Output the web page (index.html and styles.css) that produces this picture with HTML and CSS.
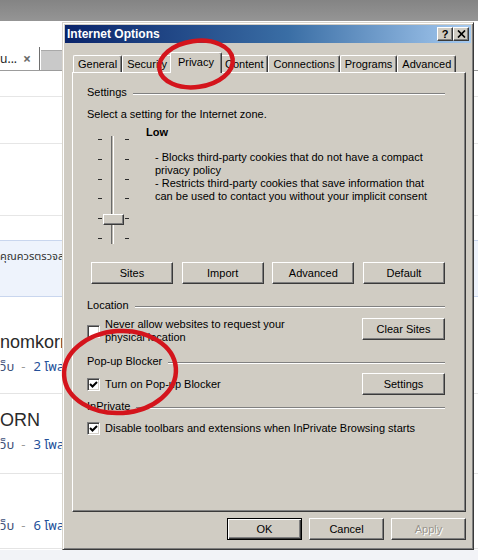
FILE: index.html
```html
<!DOCTYPE html>
<html lang="en">
<head>
<meta charset="utf-8">
<title>Internet Options</title>
<link rel="stylesheet" href="styles.css">
</head>
<body>
<div class="screen">
  <div class="topband"></div>

  <div class="browser">
    <div class="tabstrip">
      <div class="btab active"><span class="btab-title">u...</span><span class="btab-close">×</span></div>
      <div class="btab newtab"></div>
    </div>
    <div class="page">
      <div class="prow r1"></div>
      <div class="prow r2"></div>
      <div class="prow r3"></div>
      <div class="notice"><p>คุณควรตรวจสอบ</p></div>
      <div class="member m1">
        <div class="member-name">nomkorn</div>
        <div class="member-meta"><span class="kind">ว็บ</span><span class="sep">-</span><span class="posts">2 โพสต์</span></div>
      </div>
      <div class="member m2">
        <div class="member-name">ORN</div>
        <div class="member-meta"><span class="kind">ว็บ</span><span class="sep">-</span><span class="posts">3 โพสต์</span></div>
      </div>
      <div class="member m3">
        <div class="member-name">&nbsp;</div>
        <div class="member-meta"><span class="kind">ว็บ</span><span class="sep">-</span><span class="posts">6 โพสต์</span></div>
      </div>
    </div>
  </div>

  <div class="dialog">
    <div class="titlebar">
      <span class="title">Internet Options</span>
      <div class="caption-buttons">
        <span class="cap-btn help">?</span>
        <span class="cap-btn close"><svg width="9" height="8" viewBox="0 0 9 8"><path d="M1 0.5 L8 7.5 M8 0.5 L1 7.5" stroke="#000" stroke-width="1.7" fill="none"/></svg></span>
      </div>
    </div>

    <div class="tabs">
      <span class="tab">General</span>
      <span class="tab">Security</span>
      <span class="tab selected">Privacy</span>
      <span class="tab">Content</span>
      <span class="tab">Connections</span>
      <span class="tab">Programs</span>
      <span class="tab">Advanced</span>
    </div>

    <div class="panel">
      <div class="group-head"><span>Settings</span><i class="rule"></i></div>
      <p class="lead">Select a setting for the Internet zone.</p>

      <div class="zone">
        <div class="slider">
          <div class="ticks"><i></i><i></i><i></i><i></i><i></i><i></i></div>
          <div class="track"></div>
          <div class="ticks right"><i></i><i></i><i></i><i></i><i></i><i></i></div>
          <div class="thumb"></div>
        </div>
        <div class="zone-text">
          <div class="level">Low</div>
          <p class="desc">- Blocks third-party cookies that do not have a compact<br>privacy policy<br>- Restricts third-party cookies that save information that<br>can be used to contact you without your implicit consent</p>
        </div>
      </div>

      <div class="button-row">
        <span class="btn">Sites</span>
        <span class="btn">Import</span>
        <span class="btn">Advanced</span>
        <span class="btn">Default</span>
      </div>

      <div class="group-head location-head"><span>Location</span><i class="rule"></i></div>
      <div class="option-row location-row">
        <span class="check top"></span>
        <span class="option-text">Never allow websites to request your<br>physical location</span>
        <span class="btn side">Clear Sites</span>
      </div>

      <div class="group-head popup-head"><span>Pop-up Blocker</span><i class="rule"></i></div>
      <div class="option-row popup-row">
        <span class="check"><svg width="11" height="11" viewBox="0 0 11 11"><polyline points="2,5 4.5,7.5 9,3" fill="none" stroke="#000" stroke-width="2"/></svg></span>
        <span class="option-text">Turn on Pop-up Blocker</span>
        <span class="btn side">Settings</span>
      </div>

      <div class="group-head private-head"><span>InPrivate</span><i class="rule"></i></div>
      <div class="option-row private-row">
        <span class="check"><svg width="11" height="11" viewBox="0 0 11 11"><polyline points="2,5 4.5,7.5 9,3" fill="none" stroke="#000" stroke-width="2"/></svg></span>
        <span class="option-text">Disable toolbars and extensions when InPrivate Browsing starts</span>
      </div>
    </div>

    <div class="footer">
      <span class="btn wide default">OK</span>
      <span class="btn wide">Cancel</span>
      <span class="btn wide disabled">Apply</span>
    </div>
  </div>

  <svg class="marks" width="478" height="560" viewBox="0 0 478 560">
    <ellipse cx="196" cy="64" rx="37" ry="23" transform="rotate(-8 196 64)" fill="none" stroke="#d4141c" stroke-width="4.5"/>
    <ellipse cx="120" cy="372" rx="56" ry="41" transform="rotate(-4 120 372)" fill="none" stroke="#d4141c" stroke-width="4.5"/>
  </svg>
</div>
</body>
</html>
```

FILE: styles.css
```css
* { box-sizing: border-box; }

html, body {
  margin: 0;
  padding: 0;
}

body {
  width: 478px;
  height: 560px;
  overflow: hidden;
  font-family: "Liberation Sans", Arial, sans-serif;
  font-size: 11px;
  color: #000;
}

.screen {
  position: relative;
  width: 478px;
  height: 560px;
  overflow: hidden;
  background: #f2f3f7;
}

/* ---------- browser behind the dialog ---------- */

.topband {
  height: 21px;
  background: linear-gradient(#848484, #959595);
}

.browser {
  background: #fff;
  height: 529px;
}

.tabstrip {
  height: 50px;
  display: flex;
  align-items: flex-end;
  border-bottom: 1px solid #9c9c9c;
  background: #fff;
}

.btab {
  height: 23px;
}

.btab.active {
  width: 40px;
  display: flex;
  align-items: center;
  gap: 6px;
  border-right: 1px solid #6f6f6f;
  background: #fff;
  font-family: "Noto Sans", "Liberation Sans", sans-serif;
  font-size: 12px;
  color: #222;
}

.btab-close {
  color: #6a6a6a;
  font-size: 14px;
  font-weight: bold;
}

.newtab {
  width: 30px;
  height: 20px;
  margin-left: 1px;
  background: #c9c9c9;
  border-top: 1px solid #a9a9a9;
}

.page {
  font-family: "Noto Sans Thai", "Noto Sans", "DejaVu Sans", sans-serif;
}

.prow {
  border-bottom: 1px solid #e6e6e6;
}

.r1 { height: 26px; }
.r2 { height: 47px; }
.r3 { height: 72px; }

.notice {
  margin-top: 24px;
  height: 57px;
  background: #eef3fc;
  border-top: 1px solid #c9d6ee;
  border-bottom: 1px solid #c9d6ee;
}

.notice p {
  margin: 8px 0 0 0;
  font-size: 11px;
  line-height: 16px;
  color: #333;
  white-space: nowrap;
}

.member {
  border-bottom: 1px solid #e4e4e4;
}

.m1 { height: 97px; padding-top: 34px; }
.m2 { height: 80px; padding-top: 15px; }
.m3 { height: 75px; padding-top: 16px; }

.member-name {
  font-family: "Liberation Sans", Arial, sans-serif;
  font-size: 18px;
  line-height: 22px;
  color: #2a2a2a;
  white-space: nowrap;
}

.member-meta {
  margin-top: 6px;
  line-height: 16px;
  font-size: 13px;
  white-space: nowrap;
  display: flex;
}

.member-meta .kind { color: #3c4f78; }
.member-meta .sep { color: #9a9a9a; margin: 0 8px 0 7px; }
.member-meta .posts { color: #24509a; }

/* ---------- Internet Options dialog ---------- */

.dialog {
  position: absolute;
  left: 62px;
  top: 22px;
  width: 412px;
  height: 528px;
  padding: 2px;
  background: #d0ccc3;
  border: 1px solid;
  border-color: #d8d4cc #3a3a3a #3a3a3a #d8d4cc;
  box-shadow: inset 1px 1px #fff, inset -1px -1px #7f7f7f;
  z-index: 2;
}

.titlebar {
  height: 18px;
  display: flex;
  align-items: center;
  padding-left: 2px;
  padding-right: 2px;
  background: linear-gradient(to right, #0a246a 0%, #3a6ea5 55%, #a6caf0 100%);
}

.title {
  color: #fff;
  font-weight: bold;
  font-size: 12px;
}

.caption-buttons {
  margin-left: auto;
  display: flex;
}

.cap-btn {
  width: 16px;
  height: 14px;
  display: flex;
  align-items: center;
  justify-content: center;
  background: #d0ccc3;
  border: 1px solid;
  border-color: #fff #3a3a3a #3a3a3a #fff;
  box-shadow: inset -1px -1px #7f7f7f;
  font-weight: bold;
  font-size: 11px;
  line-height: 1;
}

.tabs {
  height: 29px;
  display: flex;
  align-items: flex-end;
  padding-left: 8px;
  position: relative;
  z-index: 1;
}

.tab {
  height: 17px;
  padding: 0 4px;
  display: flex;
  align-items: center;
  justify-content: center;
  border: 1px solid;
  border-bottom: none;
  border-color: #fff #3a3a3a #fff #fff;
  border-radius: 2px 2px 0 0;
  box-shadow: inset -1px 0 #7f7f7f;
  background: #d0ccc3;
  white-space: nowrap;
}

.tab.selected {
  height: 21px;
  margin: 0 -2px -1px;
  padding: 0 7px 2px;
  position: relative;
  z-index: 2;
}

.panel {
  margin-left: 7px;
  width: 394px;
  height: 440px;
  padding: 13px 20px 0 14px;
  border: 1px solid;
  border-color: #fff #3a3a3a #3a3a3a #fff;
  box-shadow: inset -1px -1px #7f7f7f;
  line-height: 13px;
}

.group-head {
  display: flex;
  align-items: center;
  height: 13px;
}

.group-head .rule {
  flex: 1;
  height: 2px;
  margin-left: 6px;
  margin-top: 2px;
  border-top: 1px solid #808080;
  border-bottom: 1px solid #fff;
}

.lead {
  margin: 9px 0 0;
}

.zone {
  display: flex;
  margin-top: 5px;
}

.slider {
  position: relative;
  display: flex;
  margin: 10px 0 0 10px;
  width: 33px;
  height: 108px;
}

.ticks {
  width: 5px;
  display: flex;
  flex-direction: column;
  justify-content: space-between;
  padding: 3px 0 5px 1px;
}

.ticks i {
  display: block;
  width: 4px;
  height: 1px;
  background: #2a2a2a;
}

.ticks.right {
  margin-left: 11px;
  padding-left: 0;
}

.track {
  margin-left: 9px;
  width: 3px;
  border-left: 1px solid #6a6a6a;
  border-right: 1px solid #fff;
  background: #bdb9b0;
}

.thumb {
  position: absolute;
  left: 6px;
  top: 78px;
  width: 21px;
  height: 11px;
  background: #d0ccc3;
  border: 1px solid;
  border-color: #fff #3a3a3a #3a3a3a #fff;
  box-shadow: inset -1px -1px #7f7f7f;
}

.zone-text {
  margin-left: 16px;
}

.level {
  font-weight: bold;
}

.desc {
  margin: 12px 0 0 9px;
  white-space: nowrap;
}

.btn {
  display: flex;
  align-items: center;
  justify-content: center;
  height: 22px;
  background: #d0ccc3;
  border: 1px solid;
  border-color: #fff #3a3a3a #3a3a3a #fff;
  box-shadow: inset -1px -1px #7f7f7f;
  white-space: nowrap;
}

.button-row {
  display: flex;
  justify-content: space-between;
  margin-top: 18px;
  padding-left: 4px;
}

.button-row .btn {
  width: 82px;
}

.location-head { margin-top: 15px; }
.popup-head { margin-top: 11px; }
.private-head { margin-top: 5px; }

.option-row {
  display: flex;
  align-items: center;
}

.location-row {
  margin-top: 6px;
  align-items: flex-start;
}

.popup-row { margin-top: 5px; }
.private-row { margin-top: 9px; }

.check {
  flex: none;
  width: 13px;
  height: 13px;
  display: flex;
  align-items: center;
  justify-content: center;
  background: #fff;
  border: 1px solid;
  border-color: #808080 #fff #fff #808080;
  box-shadow: inset 1px 1px #404040, inset -1px -1px #d4d0c8;
}

.check.top {
  margin-top: 7px;
}

.option-text {
  margin-left: 5px;
  white-space: nowrap;
}

.btn.side {
  margin-left: auto;
  width: 83px;
}

.footer {
  display: flex;
  justify-content: flex-end;
  gap: 7px;
  margin-top: 6px;
  padding-right: 5px;
}

.btn.wide {
  width: 75px;
}

.btn.default {
  border: 1px solid #000;
  box-shadow: inset 1px 1px #fff, inset -1px -1px #3a3a3a, inset -2px -2px #7f7f7f;
}

.btn.disabled {
  color: #99958d;
  text-shadow: 1px 1px #fff;
}

/* red hand-drawn rings on top of everything */
.marks {
  position: absolute;
  left: 0;
  top: 0;
  z-index: 5;
  pointer-events: none;
}
```
